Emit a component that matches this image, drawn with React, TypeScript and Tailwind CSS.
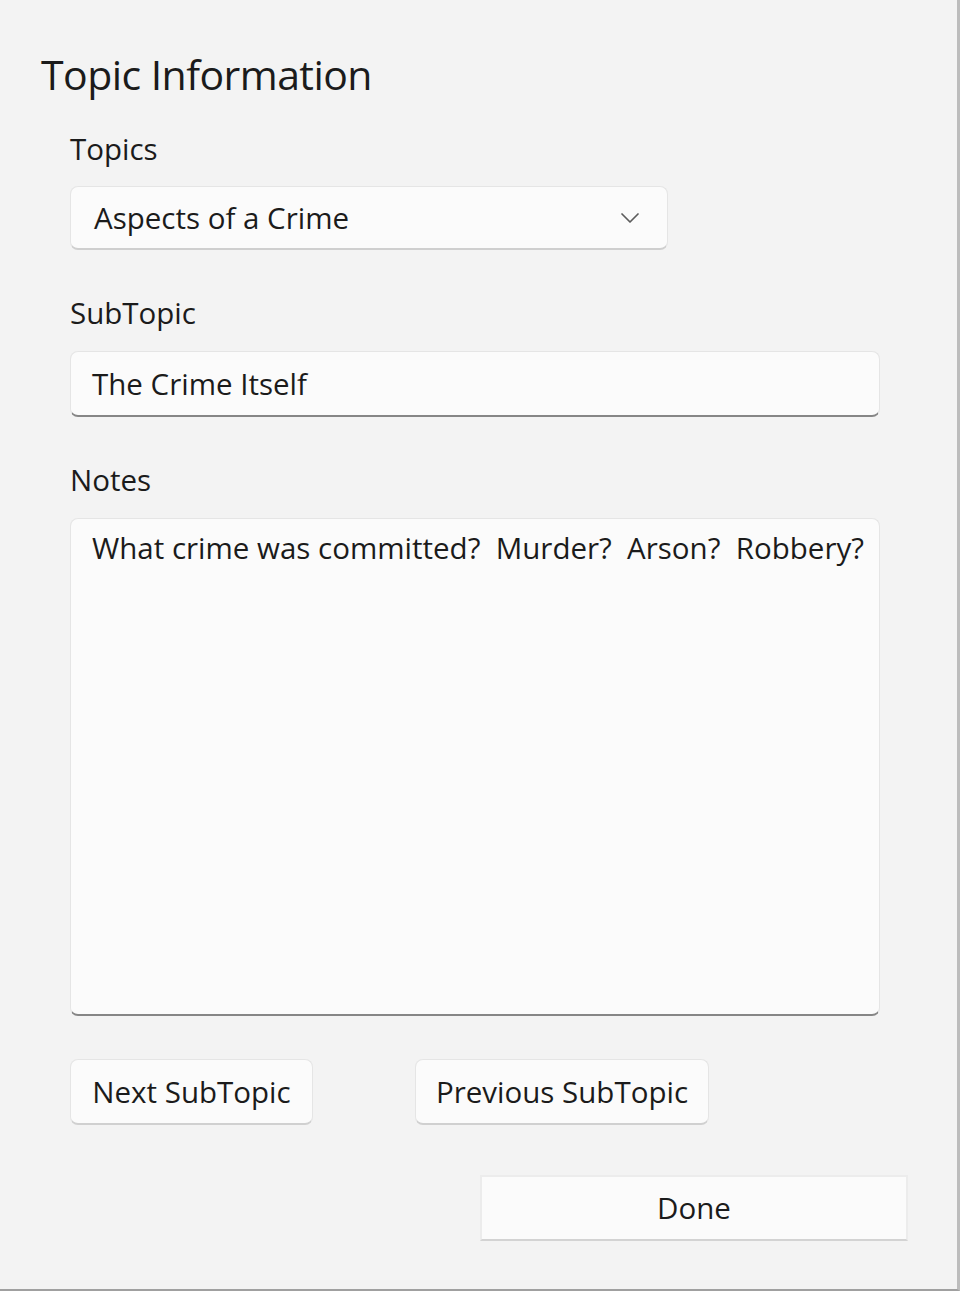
import { ChevronDown } from "lucide-react";

const font = { fontFamily: '"Open Sans", "Noto Sans", sans-serif' };

function Label({ text }: { text: string }) {
  return <div className="text-[29.5px] leading-[40px] text-[#1b1b1b]">{text}</div>;
}

export default function App() {
  return (
    <div
      className="w-[960px] h-[1291px] overflow-hidden bg-[#f3f3f3] border-r-[3px] border-b-2 border-r-[#bcbcbc] border-b-[#a0a0a0] text-[#1b1b1b]"
      style={font}
    >
      <div className="pl-[41px] pt-[48px]">
        <h1 className="text-[41px] leading-[52px] tracking-[-0.55px]">Topic Information</h1>
      </div>

      <div className="pl-[70px] pt-[29px] flex flex-col">
        <Label text="Topics" />
        <div className="mt-[17px] w-[598px] h-[64px] rounded-[8px] bg-[#fbfbfb] border border-[#e5e5e5] border-b-[#cfcfcf] border-b-2 flex items-center justify-between pl-[23px] pr-[21px]">
          <span className="text-[29.5px] leading-[40px]">Aspects of a Crime</span>
          <ChevronDown size={32} strokeWidth={1.3} className="text-[#5c5c5c]" />
        </div>

        <div className="mt-[43px]">
          <Label text="SubTopic" />
        </div>
        <div className="mt-[18px] w-[810px] h-[66px] rounded-[8px] bg-[#fbfbfb] border border-[#e5e5e5] border-b-2 border-b-[#868686] flex items-center pl-[21px]">
          <span className="text-[29.5px] leading-[40px]">The Crime Itself</span>
        </div>

        <div className="mt-[43px]">
          <Label text="Notes" />
        </div>
        <div className="mt-[18px] w-[810px] h-[498px] rounded-[8px] bg-[#fbfbfb] border border-[#e5e5e5] border-b-2 border-b-[#868686] pl-[21px] pt-[9px]">
          <span className="text-[29.5px] leading-[40px] whitespace-pre">
            {"What crime was committed?  Murder?  Arson?  Robbery?"}
          </span>
        </div>

        <div className="mt-[43px] flex gap-[102px]">
          <button className="h-[66px] w-[243px] shrink-0 rounded-[8px] bg-[#fbfbfb] border border-[#e5e5e5] border-b-2 border-b-[#d0d0d0] text-[29.5px] leading-[40px]">
            Next SubTopic
          </button>
          <button className="h-[66px] w-[294px] shrink-0 rounded-[8px] bg-[#fbfbfb] border border-[#e5e5e5] border-b-2 border-b-[#d0d0d0] text-[29.5px] leading-[40px]">
            Previous SubTopic
          </button>
        </div>

        <div className="mt-[50px] flex">
          <button className="ml-[410px] h-[66px] w-[428px] shrink-0 bg-[#fbfbfb] border-2 border-[#ececec] border-b-[#d3d3d3] text-[29.5px] leading-[40px]">
            Done
          </button>
        </div>
      </div>
    </div>
  );
}
